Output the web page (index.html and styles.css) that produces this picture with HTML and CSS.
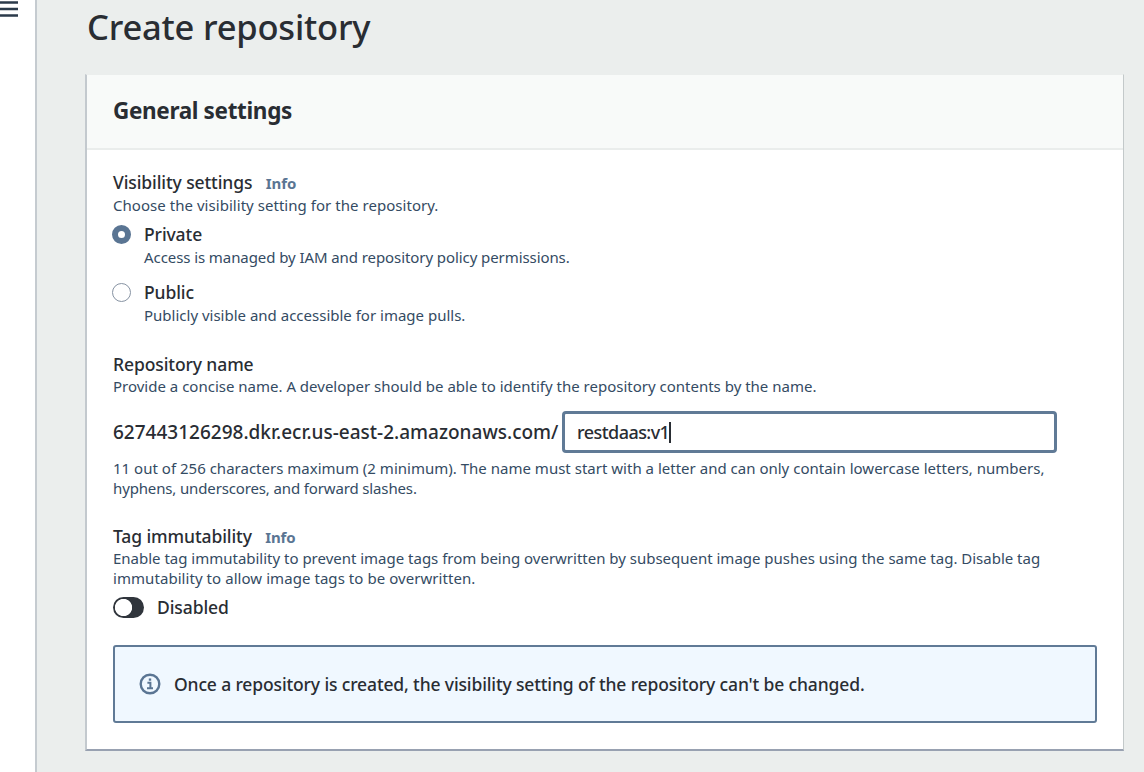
FILE: index.html
```
<!DOCTYPE html>
<html lang="en">
<head>
<meta charset="utf-8">
<title>Create repository</title>
<link rel="stylesheet" href="styles.css">
</head>
<body>
<div class="app">
  <aside class="rail">
    <svg class="menu" width="18" height="20" viewBox="0 0 18 20"><path d="M0 2.5h18M0 9h18M0 15.5h18" stroke="#2b3a4a" stroke-width="2.6"/></svg>
  </aside>
  <main class="content">
    <h1 class="title">Create repository</h1>
    <section class="panel">
      <header class="panel-header"><h2>General settings</h2></header>
      <div class="panel-body">
        <div class="field visibility">
          <div class="label">Visibility settings <a class="info">Info</a></div>
          <p class="hint choose">Choose the visibility setting for the repository.</p>
          <div class="option private">
            <span class="radio checked"></span>
            <div><div class="label option-label">Private</div><p class="hint">Access is managed by IAM and repository policy permissions.</p></div>
          </div>
          <div class="option public">
            <span class="radio"></span>
            <div><div class="label option-label">Public</div><p class="hint">Publicly visible and accessible for image pulls.</p></div>
          </div>
        </div>
        <div class="field name">
          <div class="label">Repository name</div>
          <p class="hint provide">Provide a concise name. A developer should be able to identify the repository contents by the name.</p>
          <div class="uri-row">
            <span class="uri">627443126298.dkr.ecr.us-east-2.amazonaws.com/</span>
            <div class="input"><span class="value">restdaas:v1</span><span class="caret"></span></div>
          </div>
          <p class="hint constraint">11 out of 256 characters maximum (2 minimum). The name must start with a letter and can only contain lowercase letters, numbers,<br><span class="tight">hyphens, underscores, and forward slashes.</span></p>
        </div>
        <div class="field tag">
          <div class="label">Tag immutability <a class="info">Info</a></div>
          <p class="hint enable">Enable tag immutability to prevent image tags from being overwritten by subsequent image pushes using the same tag. Disable tag<br><span class="loose">immutability to allow image tags to be overwritten.</span></p>
          <div class="toggle-row"><span class="toggle"></span><span class="label disabled">Disabled</span></div>
        </div>
        <div class="alert">
          <svg width="22" height="22" viewBox="0 0 22 22" fill="none" stroke="#5a7593"><circle cx="11" cy="11" r="9.3" stroke-width="2.4"/><path d="M8.4 9.7H11.4V15.2M8 15.3h6" stroke-width="2"/><path d="M9.8 6.6h2.4" stroke-width="2.3"/></svg>
          <span class="alert-text">Once a repository is created, the visibility setting of the repository can't be changed.</span>
        </div>
      </div>
    </section>
  </main>
</div>
</body>
</html>
```
FILE: styles.css
```
* { box-sizing: border-box; }
body { margin: 0; font-family: "Noto Sans", sans-serif; color: #292d33; background: #ebeeed; }
h1, h2, p { margin: 0; }
.app { display: flex; height: 772px; overflow: hidden; }
.rail { width: 37px; flex: none; background: #fff; border-right: 2px solid #c5cbd0; }
.menu { display: block; }
.content { flex: 1; padding: 4px 20px 0 48px; }
.title { padding-left: 2px; font-size: 34.5px; line-height: 46px; font-weight: 500; letter-spacing: -.2px; white-space: nowrap; }
.panel { margin-top: 24px; height: 677px; background: #fff; border: 1px solid #c3c9ca; border-top: 1px solid #ebeeed; border-left: 2px solid #c3c9ce; border-bottom: 2px solid #98a1b1; }
.panel-header { height: 75px; display: flex; align-items: center; padding: 0 0 2px 26px; background: #f8faf9; border-bottom: 2px solid #eaedec; }
.panel-header h2 { font-size: 22.5px; line-height: 30px; font-weight: 700; letter-spacing: -.35px; }
.panel-body { padding: 20px 26px 0; }
.label { font-size: 17.5px; line-height: 24px; height: 24px; font-weight: 500; letter-spacing: -.1px; white-space: nowrap; }
.info { margin-left: 9px; font-size: 15px; font-weight: 700; color: #5a7593; letter-spacing: -.1px; }
.hint { font-size: 15px; line-height: 20px; color: #344b63; white-space: nowrap; }
.choose { margin-top: 1px; letter-spacing: .04px; }
.option { display: flex; gap: 12px; }
.option .hint { margin-top: 1px; letter-spacing: -.08px; }
.option.public .hint { letter-spacing: 0; }
.private { margin-top: 7px; }
.public { margin-top: 13px; }
.radio { width: 19px; height: 19px; margin: 3px 1px 0 -1px; flex: none; border: 1.5px solid #8793a3; border-radius: 50%; background: #fff; }
.radio.checked { border: 6px solid #5a7593; }
.name { margin-top: 27px; }
.uri-row { display: flex; align-items: center; justify-content: space-between; width: 944px; margin-top: 15px; }
.uri { font-size: 19px; font-weight: 500; white-space: nowrap; }
.input { width: 495px; height: 42px; display: flex; align-items: center; padding-left: 12px; border: 3px solid #607a96; border-radius: 4px; }
.value { font-size: 18px; font-weight: 500; letter-spacing: -.55px; }
.caret { width: 1.5px; height: 21px; background: #292d33; }
.constraint { margin-top: 5px; letter-spacing: .01px; }
.tight { letter-spacing: -.14px; }
.loose { letter-spacing: .06px; }
.enable { letter-spacing: -.01px; }
.tag { margin-top: 26px; }
.toggle-row { display: flex; align-items: center; gap: 13px; margin-top: 7px; }
.toggle { width: 31px; height: 21px; border-radius: 11px; background: radial-gradient(circle at 10.5px 10.5px, #fff 8.2px, #30353c 9px); }
.alert { display: flex; align-items: center; gap: 13px; height: 78px; margin-top: 26px; padding-left: 24px; background: #f0f8ff; border: 2px solid #607a96; border-radius: 3px; }
.alert-text { font-size: 17.5px; line-height: 24px; font-weight: 500; letter-spacing: -.14px; white-space: nowrap; }
```
